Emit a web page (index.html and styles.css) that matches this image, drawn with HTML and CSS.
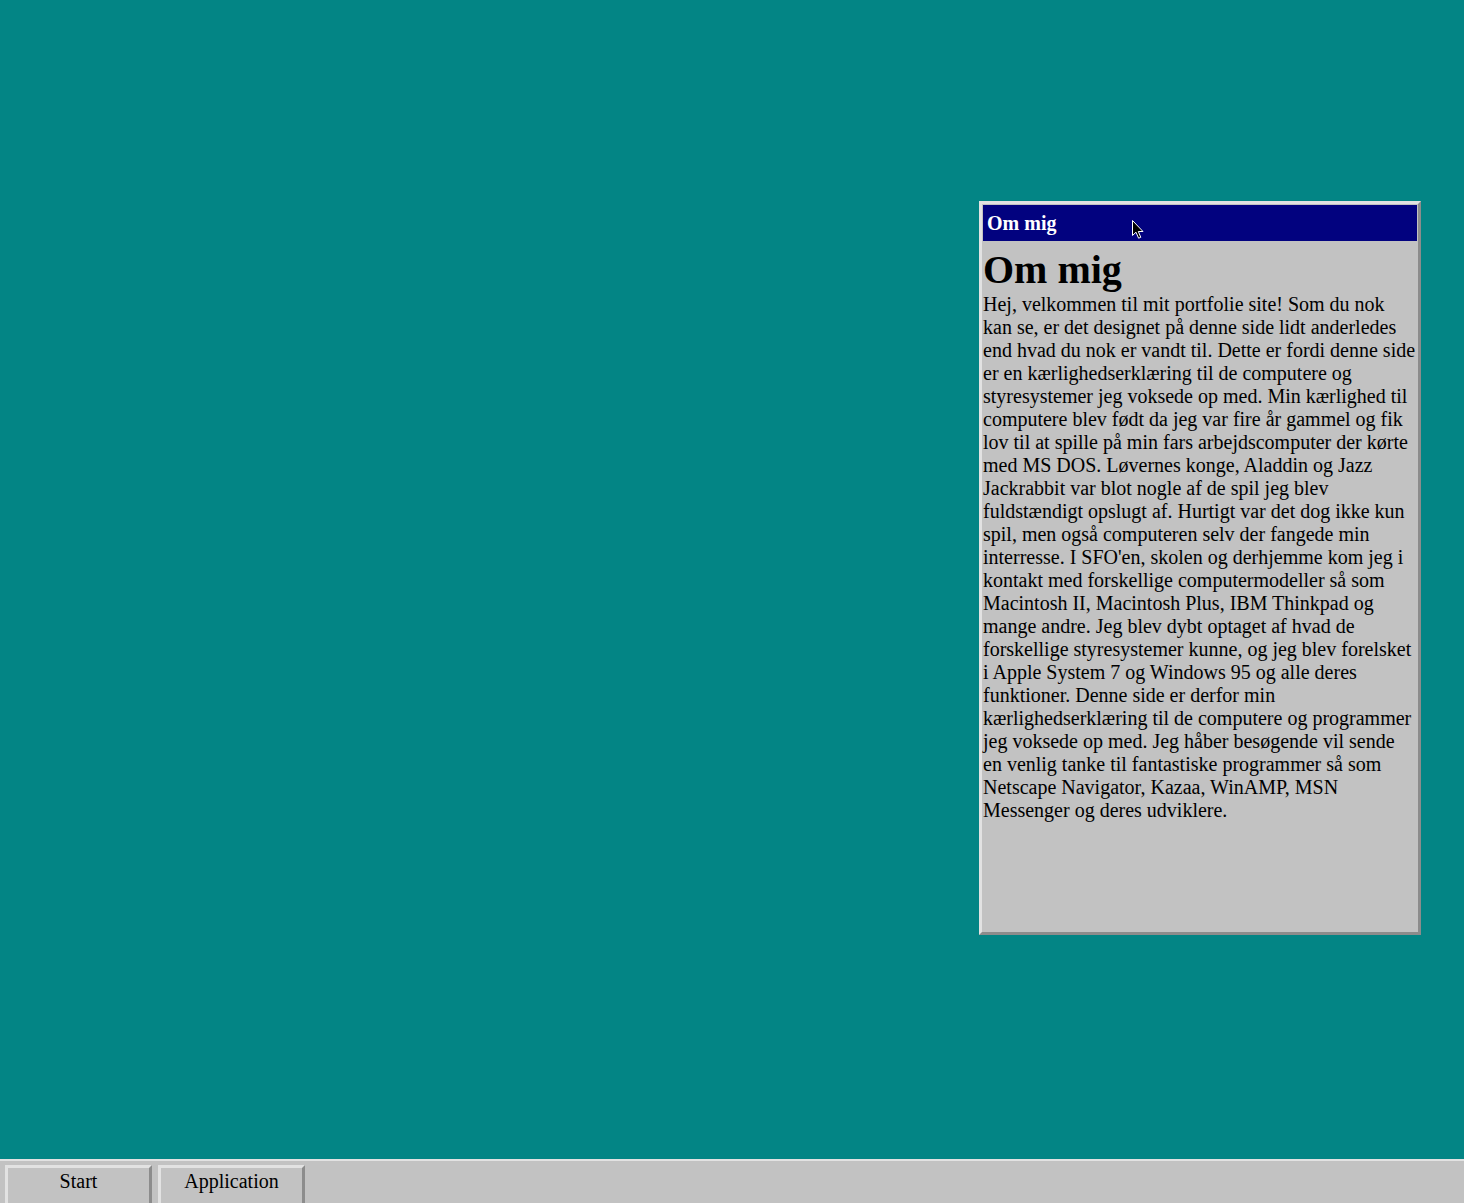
FILE: index.html
```html
<!DOCTYPE html>
<html lang="da">
<head>
<meta charset="utf-8">
<title>Om mig</title>
<link rel="stylesheet" href="styles.css">
</head>
<body>
<main class="desktop">
  <section class="window">
    <header class="titlebar">Om mig</header>
    <div class="window-body">
      <h1 class="heading">Om mig</h1>
      <p class="text">Hej, velkommen til mit portfolie site! Som du nok kan se, er det designet på denne side lidt anderledes end hvad du nok er vandt til. Dette er fordi denne side er en kærlighedserklæring til de computere og styresystemer jeg voksede op med. Min kærlighed til computere blev født da jeg var fire år gammel og fik lov til at spille på min fars arbejdscomputer der kørte med MS DOS. Løvernes konge, Aladdin og Jazz Jackrabbit var blot nogle af de spil jeg blev fuldstændigt opslugt af. Hurtigt var det dog ikke kun spil, men også computeren selv der fangede min interresse. I SFO'en, skolen og derhjemme kom jeg i kontakt med forskellige computermodeller så som Macintosh II, Macintosh Plus, IBM Thinkpad og mange andre. Jeg blev dybt optaget af hvad de forskellige styresystemer kunne, og jeg blev forelsket i Apple System 7 og Windows 95 og alle deres funktioner. Denne side er derfor min kærlighedserklæring til de computere og programmer jeg voksede op med. Jeg håber besøgende vil sende en venlig tanke til fantastiske programmer så som Netscape Navigator, Kazaa, WinAMP, MSN Messenger og deres udviklere.</p>
    </div>
    <svg class="cursor" width="12" height="20" viewBox="0 0 12 20" aria-hidden="true">
      <path d="M0.5 0.5 L0.5 15.5 L4 12.2 L6.6 18.2 L8.8 17.3 L6.3 11.5 L11 11.5 Z" fill="#000" stroke="#fff" stroke-width="1"/>
    </svg>
  </section>
</main>
<footer class="taskbar">
  <button class="task-button">Start</button>
  <button class="task-button">Application</button>
</footer>
</body>
</html>
```
FILE: styles.css
```css
html, body {
  margin: 0;
  padding: 0;
}

body {
  background: #038585;
  font-family: "Liberation Serif", "Times New Roman", serif;
  color: #000;
  width: 1464px;
  height: 1203px;
  overflow: hidden;
  position: relative;
}

.desktop {
  position: relative;
  height: 1159px;
}

.window {
  position: absolute;
  left: 979px;
  top: 201px;
  width: 434px;
  height: 726px;
  padding: 1px;
  background: #c2c2c2;
  border: 3px solid;
  border-color: #e2e2e2 #8c8c8c #8c8c8c #e2e2e2;
  display: flex;
  flex-direction: column;
}

.titlebar {
  height: 36px;
  background: #02027f;
  color: #fff;
  font-weight: bold;
  font-size: 20px;
  display: flex;
  align-items: center;
  padding-left: 4px;
}

.window-body {
  flex: 1;
  padding-top: 6px;
}

.heading {
  margin: 0;
  font-size: 40px;
  font-weight: bold;
  line-height: 46px;
}

.text {
  margin: 0;
  font-size: 20px;
  line-height: 23px;
}

.cursor {
  position: absolute;
  left: 150px;
  top: 16px;
}

.taskbar {
  position: absolute;
  left: 0;
  bottom: 0;
  width: 1464px;
  height: 44px;
  background: #c2c2c2;
  border-top: 2px solid #e2e2e2;
  display: flex;
  gap: 6px;
  padding: 4px 0 0 5px;
  box-sizing: border-box;
  overflow: hidden;
}

.task-button {
  width: 147px;
  height: 44px;
  background: #c2c2c2;
  border: 3px solid;
  border-color: #e2e2e2 #8c8c8c #8c8c8c #e2e2e2;
  font-family: "Liberation Serif", "Times New Roman", serif;
  font-size: 20px;
  color: #000;
  padding: 2px 0 0;
  display: flex;
  justify-content: center;
  align-items: flex-start;
  line-height: 23px;
  flex-shrink: 0;
}
```
